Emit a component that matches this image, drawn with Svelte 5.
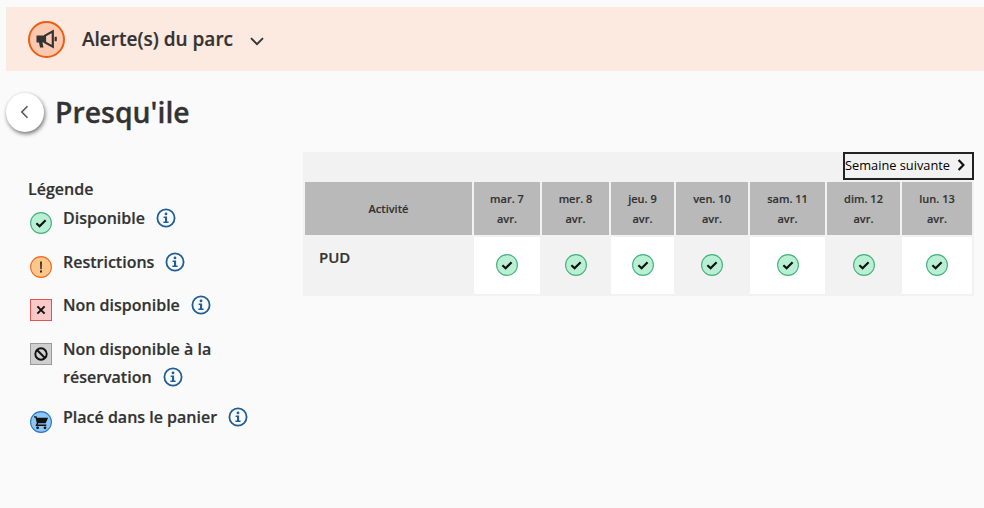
<script>
  const days = [
    ['mar. 7', 66], ['mer. 8', 67], ['jeu. 9', 63], ['ven. 10', 72],
    ['sam. 11', 75], ['dim. 12', 73], ['lun. 13', 70]
  ];
  const legend = [
    { kind: 'ok', lines: ['Disponible'] },
    { kind: 'warn', lines: ['Restrictions'] },
    { kind: 'no', lines: ['Non disponible'] },
    { kind: 'blocked', lines: ['Non disponible à la', 'réservation'] },
    { kind: 'cart', lines: ['Placé dans le panier'] }
  ];
</script>

{#snippet info()}
  <svg class="info" viewBox="0 0 20 20" width="20" height="20" aria-hidden="true">
    <circle cx="10" cy="10" r="8.6" fill="none" stroke="#1f5f93" stroke-width="1.8" />
    <circle cx="10" cy="5.9" r="1.4" fill="#1f5f93" />
    <path d="M7.6 8.4h3.5v5.1h1.5v1.6H7.4v-1.6h1.6V10H7.6z" fill="#1f5f93" />
  </svg>
{/snippet}

{#snippet check(size)}
  <svg viewBox="0 0 22 22" width={size} height={size} aria-hidden="true">
    <circle cx="11" cy="11" r="10.4" fill="#b9f0d3" stroke="#45b17e" stroke-width="1.1" />
    <path d="M6.4 11.2l3.2 3 6-5.9" fill="none" stroke="#111" stroke-width="2.2" />
  </svg>
{/snippet}

<div class="page">
  <header class="banner">
    <span class="megaphone">
      <svg viewBox="0 0 24 24" width="24" height="24" aria-hidden="true">
        <path d="M1.5 8.6h8v6.8H7.4l1.1 5.1H5l-1-5.1H1.5z" fill="#333" />
        <path d="M10 8.6l7.8-4.2v15.2L10 15.4z" fill="none" stroke="#333" stroke-width="2.2" />
        <path d="M19.6 9.8h2.2v4.4h-2.2z" fill="#333" />
      </svg>
    </span>
    <span class="banner-title">Alerte(s) du parc</span>
    <svg class="caret" viewBox="0 0 14 9" width="14" height="9" aria-hidden="true">
      <path d="M1 1.2l6 6 6-6" fill="none" stroke="#333" stroke-width="1.9" />
    </svg>
  </header>

  <div class="title-row">
    <button class="back" aria-label="Retour">
      <svg viewBox="0 0 9 14" width="9" height="14" aria-hidden="true">
        <path d="M7.5 1.2L1.8 7l5.7 5.8" fill="none" stroke="#555" stroke-width="1.6" />
      </svg>
    </button>
    <h1>Presqu'ile</h1>
  </div>

  <div class="content">
    <aside class="legend">
      <h2>Légende</h2>
      {#each legend as item}
        <div class="item" class:tall={item.lines.length > 1}>
          <span class="icon">
            {#if item.kind === 'ok'}
              {@render check(22)}
            {:else if item.kind === 'warn'}
              <svg viewBox="0 0 22 22" width="22" height="22" aria-hidden="true">
                <circle cx="11" cy="11" r="10.4" fill="#fdc78b" stroke="#ef6a1c" stroke-width="1.1" />
                <path d="M10.2 5.6h1.6l-.2 7.6h-1.2zM10.1 14.6h1.8v1.8h-1.8z" fill="#111" />
              </svg>
            {:else if item.kind === 'no'}
              <svg viewBox="0 0 22 22" width="22" height="22" aria-hidden="true">
                <rect x=".5" y=".5" width="21" height="21" fill="#f8c9c9" stroke="#df5555" />
                <path d="M7.4 7.4l7.2 7.2M14.6 7.4l-7.2 7.2" stroke="#111" stroke-width="2" />
              </svg>
            {:else if item.kind === 'blocked'}
              <svg viewBox="0 0 22 22" width="22" height="22" aria-hidden="true">
                <rect x=".5" y=".5" width="21" height="21" fill="#cfcfcf" stroke="#999" />
                <circle cx="11" cy="11" r="5.7" fill="none" stroke="#111" stroke-width="1.9" />
                <path d="M7 7l8 8" stroke="#111" stroke-width="1.9" />
              </svg>
            {:else}
              <svg viewBox="0 0 22 22" width="22" height="22" aria-hidden="true">
                <circle cx="11" cy="11" r="10.4" fill="#8fc5f2" stroke="#2377c4" stroke-width="1.1" />
                <path d="M4 5.2h2.4l.7 1.5h11l-2.4 5.6H8.2l-.6 1.2h8.7v1.4H5.4l1.4-2.8L5.4 6.6H4z" fill="#111" />
                <circle cx="7.6" cy="16.8" r="1.4" fill="#111" />
                <circle cx="15" cy="16.8" r="1.4" fill="#111" />
              </svg>
            {/if}
          </span>
          <span class="label">
            {#each item.lines as line, i}
              {#if i === item.lines.length - 1}
                <span class="line"><span>{line}</span>{@render info()}</span>
              {:else}
                <span class="line"><span>{line}</span></span>
              {/if}
            {/each}
          </span>
        </div>
      {/each}
    </aside>

    <section class="planning">
      <div class="toolbar">
        <button class="next">
          Semaine suivante
          <svg viewBox="0 0 9 12" width="9" height="12" aria-hidden="true">
            <path d="M1.6 1l4.8 5-4.8 5" fill="none" stroke="#111" stroke-width="2.2" />
          </svg>
        </button>
      </div>
      <table>
        <colgroup>
          <col style="width: 167px" />
          {#each days as day}
            <col style="width: {day[1]}px" />
          {/each}
        </colgroup>
        <thead>
          <tr>
            <th>Activité</th>
            {#each days as day}
              <th>{day[0]}<br />avr.</th>
            {/each}
          </tr>
        </thead>
        <tbody>
          <tr>
            <td class="activity">PUD</td>
            {#each days as day, i}
              <td class="slot" class:odd={i % 2 === 1}>
                {@render check(22)}
              </td>
            {/each}
          </tr>
        </tbody>
      </table>
    </section>
  </div>
</div>

<style>
  :global(body) {
    background: #fafafa;
  }

  .page {
    height: 508px;
    padding-top: 7px;
    box-sizing: border-box;
    overflow: hidden;
    font-family: "Open Sans", "Noto Sans", sans-serif;
    color: #333;
  }

  .banner {
    display: flex;
    align-items: center;
    height: 64px;
    margin-left: 6px;
    padding-left: 22px;
    background: #fce9e0;
  }

  .megaphone {
    display: flex;
    align-items: center;
    justify-content: center;
    width: 37px;
    height: 37px;
    box-sizing: border-box;
    border: 2px solid #ea5f14;
    border-radius: 50%;
    background: #fbc9b0;
  }

  .banner-title {
    margin-left: 17px;
    font-size: 19px;
    font-weight: 600;
    -webkit-text-stroke: 0.2px currentColor;
  }

  .caret {
    margin: 4px 0 0 17px;
  }

  .title-row {
    display: flex;
    align-items: center;
    gap: 11px;
    margin: 20px 0 0 6px;
  }

  .back {
    display: flex;
    align-items: center;
    justify-content: center;
    width: 38px;
    height: 39px;
    padding: 0 2px 0 0;
    border: 0;
    border-radius: 50%;
    background: #fff;
    box-shadow: 1px 2px 4px rgba(0, 0, 0, 0.55);
  }

  h1 {
    margin: 0;
    font-size: 28.4px;
    line-height: 42px;
    font-weight: 600;
    -webkit-text-stroke: 0.3px currentColor;
  }

  .content {
    display: flex;
    margin-top: 19px;
  }

  .legend {
    width: 303px;
    flex: none;
    box-sizing: border-box;
    padding: 23px 0 0 28px;
  }

  h2 {
    margin: 0 0 1px;
    font-size: 16px;
    line-height: 28px;
    font-weight: 600;
    -webkit-text-stroke: 0.2px currentColor;
  }

  .item {
    display: flex;
    margin-bottom: 15.67px;
    font-size: 16px;
    line-height: 28px;
    font-weight: 600;
    -webkit-text-stroke: 0.2px currentColor;
  }

  .item.tall {
    margin-bottom: 12px;
  }

  .icon {
    flex: none;
    width: 22px;
    height: 22px;
    margin: 8px 11px -2px 2px;
  }

  .icon svg {
    display: block;
  }

  .label {
    display: block;
  }

  .line {
    display: flex;
    align-items: center;
    height: 28px;
  }

  .info {
    flex: none;
    margin-left: 11px;
  }

  .planning {
    width: 671px;
    flex: none;
    height: 144px;
    background: #f2f2f2;
  }

  .toolbar {
    display: flex;
    justify-content: flex-end;
    height: 28px;
  }

  .next {
    display: flex;
    align-items: center;
    gap: 7px;
    height: 28px;
    width: 131px;
    box-sizing: border-box;
    padding: 0 0 2px 0;
    border: 2px solid #222;
    background: #f2f2f2;
    font: 12.8px "Open Sans", "Noto Sans", sans-serif;
    color: #000;
    white-space: nowrap;
  }

  table {
    table-layout: fixed;
    border-collapse: separate;
    border-spacing: 2px;
    width: 671px;
  }

  th {
    height: 53px;
    padding: 0;
    background: #b9b9b9;
    font-size: 11px;
    line-height: 20px;
    font-weight: 600;
    text-align: center;
    color: #333;
    -webkit-text-stroke: 0.15px currentColor;
  }

  td {
    height: 57px;
    padding: 0;
  }

  .activity {
    padding: 9px 0 0 14px;
    box-sizing: border-box;
    vertical-align: top;
    font-size: 15px;
    line-height: 22px;
    font-weight: 600;
    -webkit-text-stroke: 0.2px currentColor;
  }

  .slot {
    background: #fff;
    text-align: center;
    vertical-align: middle;
    padding-bottom: 1px;
    box-sizing: border-box;
  }

  .slot.odd {
    background: #f2f2f2;
  }

  .slot svg {
    display: block;
    margin: 0 auto;
  }
</style>
